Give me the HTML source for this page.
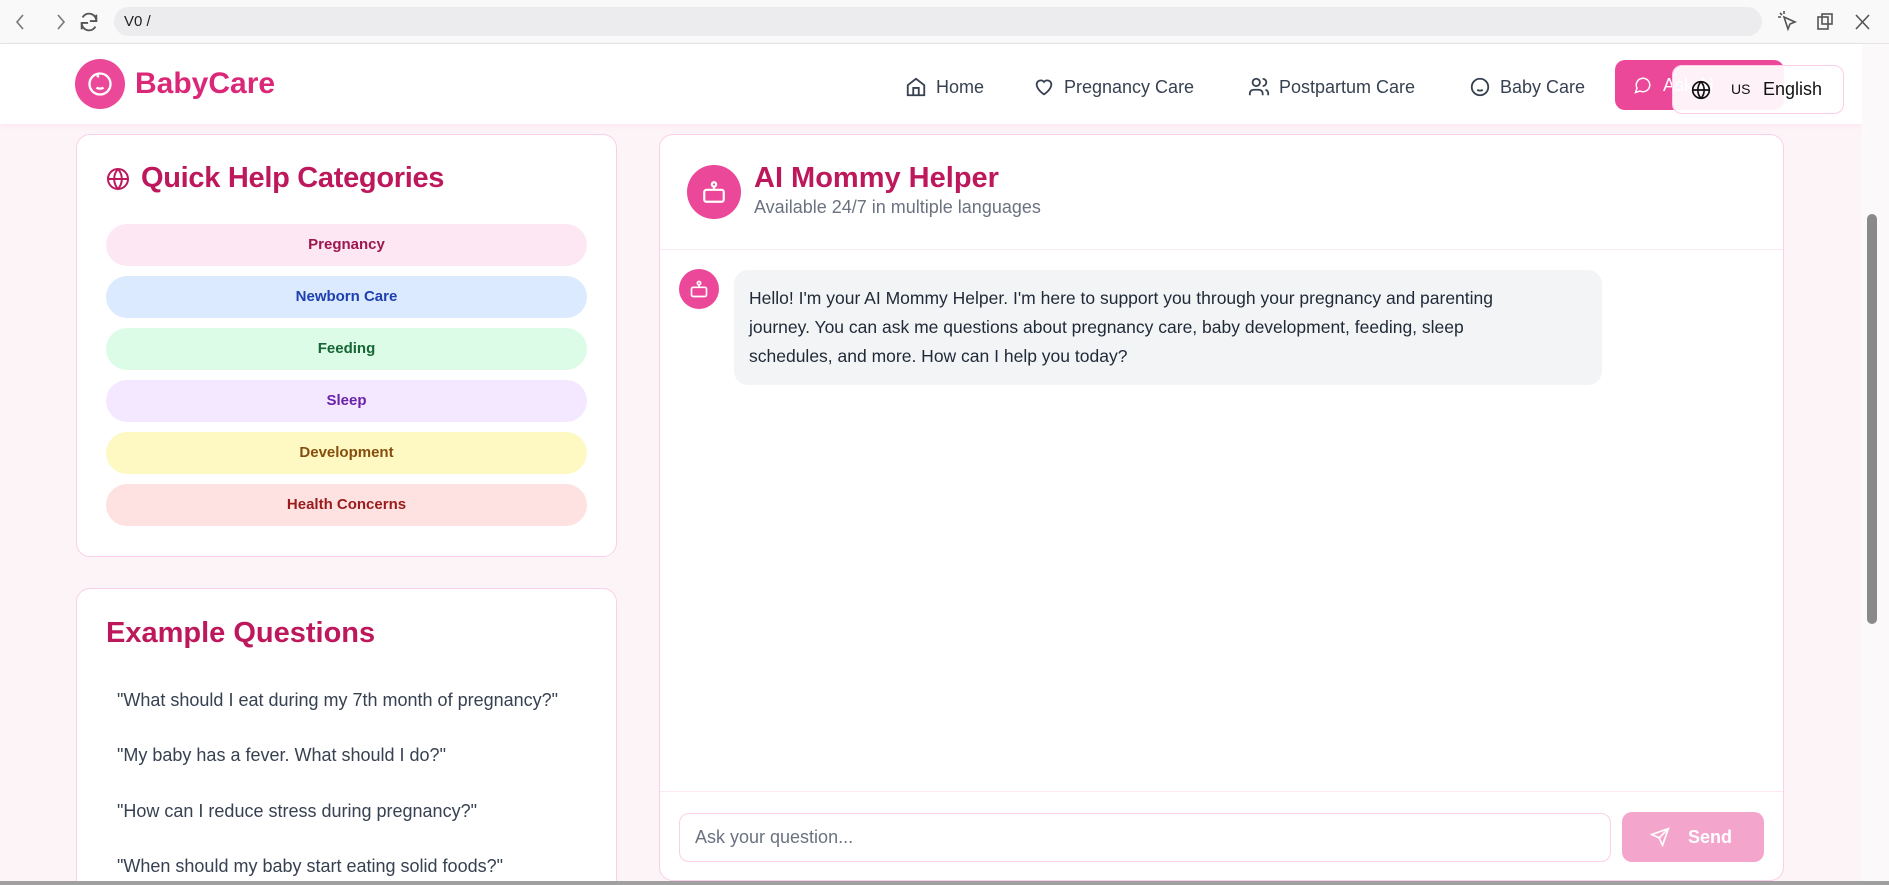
<!DOCTYPE html>
<html><head><meta charset="utf-8"><style>
*{box-sizing:border-box;margin:0;padding:0}
html,body{width:1889px;height:885px;overflow:hidden}
body{font-family:"Liberation Sans",sans-serif;background:#fdf4f8;position:relative;color:#1f2937}
.abs{position:absolute}
.topbar{left:0;top:0;width:1889px;height:44px;background:#f9f9f9;border-bottom:1px solid #e5e5e5}
.addr{left:114px;top:7px;width:1648px;height:29px;background:#ececee;border-radius:15px;font-size:15px;line-height:29px;padding-left:10px;color:#222}
.nav{left:0;top:44px;width:1862px;height:80px;background:#fff;box-shadow:0 2px 6px rgba(236,72,153,.08)}
.card{background:#fff;border:1px solid #fbcfe8;border-radius:14px}
.pill{position:absolute;left:106px;width:481px;height:42px;border-radius:21px;text-align:center;line-height:42px;font-size:15px;font-weight:bold}
.navi{position:absolute;top:76px;font-size:18px;color:#374151;display:flex;align-items:center;gap:9px}
.q{position:absolute;left:117px;font-size:18px;color:#374151}
.msg{font-size:17.5px;line-height:29px;color:#1f2937}
</style></head><body>
<div class="abs topbar"></div>
<svg class="abs" style="left:10px;top:12px" width="80" height="20" viewBox="0 0 80 20" fill="none" stroke="#777" stroke-width="1.6"><path d="M13 3 7 10l6 7"/><path d="M48 3l6 7-6 7"/></svg>
<svg class="abs" style="left:78px;top:11px" width="22" height="22" viewBox="0 0 24 24" fill="none" stroke="#555" stroke-width="2"><path d="M20 11A8 8 0 0 0 5 7M4 13a8 8 0 0 0 15 4"/><path d="M20 4v7h-7M4 20v-7h7"/></svg>
<div class="abs addr">V0 /</div>
<svg class="abs" style="left:1778px;top:11px" width="100" height="22" viewBox="0 0 100 22" fill="none" stroke="#555" stroke-width="1.6"><path d="M6 6l4 12 2-5 5-2z"/><path d="M2 2l2 2M6 0v3M0 6h3"/><rect x="40" y="6" width="10" height="12"/><rect x="44" y="3" width="10" height="10"/><path d="M78 4l13 14M91 4 78 18"/></svg>
<div class="abs nav"></div>
<div class="abs" style="left:75px;top:59px;width:50px;height:50px;border-radius:50%;background:#ec4899"></div>
<svg class="abs" style="left:86px;top:70px" width="28" height="28" viewBox="0 0 24 24" fill="none" stroke="#fff" stroke-width="2"><circle cx="12" cy="12" r="9"/><path d="M9 15c1.5 1.3 4.5 1.3 6 0M9 10h.01M15 10h.01M12 3c-2 0-3 2-1 3"/></svg>
<div class="abs" style="left:135px;top:67px;font-size:30px;font-weight:bold;color:#db2777">BabyCare</div>
<div class="navi" style="left:905px"><svg width="22" height="22" viewBox="0 0 24 24" fill="none" stroke="#374151" stroke-width="2"><path d="M3 10l9-7 9 7v11H3z"/><path d="M9 21v-8h6v8"/></svg>Home</div>
<div class="navi" style="left:1033px"><svg width="22" height="22" viewBox="0 0 24 24" fill="none" stroke="#374151" stroke-width="2"><path d="M12 20s-8-5-8-11a4.5 4.5 0 0 1 8-2.5A4.5 4.5 0 0 1 20 9c0 6-8 11-8 11z"/></svg>Pregnancy Care</div>
<div class="navi" style="left:1248px"><svg width="22" height="22" viewBox="0 0 24 24" fill="none" stroke="#374151" stroke-width="2"><circle cx="9" cy="7" r="4"/><path d="M2 21v-2a4 4 0 0 1 4-4h6a4 4 0 0 1 4 4v2M16 3a4 4 0 0 1 0 8M22 21v-2a4 4 0 0 0-3-4"/></svg>Postpartum Care</div>
<div class="navi" style="left:1469px"><svg width="22" height="22" viewBox="0 0 24 24" fill="none" stroke="#374151" stroke-width="2"><circle cx="12" cy="12" r="9"/><path d="M9 15c1.5 1.3 4.5 1.3 6 0M9 10h.01M15 10h.01"/></svg>Baby Care</div>
<div class="abs" style="left:1615px;top:60px;width:169px;height:50px;border-radius:10px;background:#ec4899;color:#fff;font-size:18px;line-height:50px;padding-left:48px">Ask AI</div>
<svg class="abs" style="left:1634px;top:76px" width="18" height="18" viewBox="0 0 24 24" fill="none" stroke="#fff" stroke-width="2"><path d="M7.9 20A9 9 0 1 0 4 16.1L2 22z"/></svg>
<div class="abs" style="left:1672px;top:65px;width:172px;height:49px;border-radius:10px;background:rgba(255,255,255,.93);border:1px solid #fbcfe8;font-size:18px;line-height:47px;color:#111"><svg style="position:absolute;left:18px;top:14px" width="20" height="20" viewBox="0 0 24 24" fill="none" stroke="#111" stroke-width="2"><circle cx="12" cy="12" r="10"/><path d="M2 12h20M12 2a15 15 0 0 1 0 20M12 2a15 15 0 0 0 0 20"/></svg><span style="position:absolute;left:58px;font-size:14px">US</span><span style="position:absolute;left:90px">English</span></div>

<div class="abs card" style="left:76px;top:134px;width:541px;height:423px"></div>
<svg class="abs" style="left:106px;top:167px" width="24" height="24" viewBox="0 0 24 24" fill="none" stroke="#be185d" stroke-width="2"><circle cx="12" cy="12" r="10"/><path d="M2 12h20M12 2a15 15 0 0 1 0 20M12 2a15 15 0 0 0 0 20"/></svg>
<div class="abs" style="left:141px;top:162px;font-size:29px;font-weight:bold;color:#be185d;letter-spacing:-.3px">Quick Help Categories</div>
<div class="pill" style="top:224px;background:#fce7f3;color:#9d174d">Pregnancy</div>
<div class="pill" style="top:276px;background:#dbeafe;color:#1e40af">Newborn Care</div>
<div class="pill" style="top:328px;background:#dcfce7;color:#166534">Feeding</div>
<div class="pill" style="top:380px;background:#f3e8ff;color:#6b21a8">Sleep</div>
<div class="pill" style="top:432px;background:#fef9c3;color:#854d0e">Development</div>
<div class="pill" style="top:484px;background:#fee2e2;color:#991b1b">Health Concerns</div>

<div class="abs card" style="left:76px;top:588px;width:541px;height:320px"></div>
<div class="abs" style="left:106px;top:617px;font-size:29px;font-weight:bold;color:#be185d">Example Questions</div>
<div class="q" style="top:690px">"What should I eat during my 7th month of pregnancy?"</div>
<div class="q" style="top:745px">"My baby has a fever. What should I do?"</div>
<div class="q" style="top:801px">"How can I reduce stress during pregnancy?"</div>
<div class="q" style="top:856px">"When should my baby start eating solid foods?"</div>

<div class="abs card" style="left:659px;top:134px;width:1125px;height:747px"></div>
<div class="abs" style="left:687px;top:165px;width:54px;height:54px;border-radius:50%;background:#ec4899"></div>
<svg class="abs" style="left:701px;top:179px" width="26" height="26" viewBox="0 0 24 24" fill="none" stroke="#fff" stroke-width="2"><rect x="3" y="10" width="18" height="11" rx="2"/><circle cx="12" cy="5" r="2"/><path d="M12 7v3M8 15h.01M16 15h.01"/></svg>
<div class="abs" style="left:754px;top:162px;font-size:29px;font-weight:bold;color:#be185d">AI Mommy Helper</div>
<div class="abs" style="left:754px;top:197px;font-size:18px;color:#6b7280">Available 24/7 in multiple languages</div>
<div class="abs" style="left:660px;top:249px;width:1123px;height:1px;background:#fce7f3"></div>
<div class="abs" style="left:679px;top:269px;width:40px;height:40px;border-radius:50%;background:#ec4899"></div>
<svg class="abs" style="left:689px;top:279px" width="20" height="20" viewBox="0 0 24 24" fill="none" stroke="#fff" stroke-width="2"><rect x="3" y="10" width="18" height="11" rx="2"/><circle cx="12" cy="5" r="2"/><path d="M12 7v3M8 15h.01M16 15h.01"/></svg>
<div class="abs msg" style="left:734px;top:270px;width:868px;height:115px;background:#f3f4f6;border-radius:14px;padding:14px 15px;white-space:nowrap">Hello! I'm your AI Mommy Helper. I'm here to support you through your pregnancy and parenting<br>journey. You can ask me questions about pregnancy care, baby development, feeding, sleep<br>schedules, and more. How can I help you today?</div>
<div class="abs" style="left:660px;top:791px;width:1123px;height:1px;background:#fce7f3"></div>
<div class="abs" style="left:679px;top:813px;width:932px;height:49px;border:1px solid #fbcfe8;border-radius:10px;font-size:18px;line-height:47px;padding-left:15px;color:#6b7280">Ask your question...</div>
<div class="abs" style="left:1622px;top:812px;width:142px;height:50px;border-radius:10px;background:#f4a5cc;color:#fff;font-size:18px;font-weight:bold;line-height:50px;padding-left:66px">Send</div>
<svg class="abs" style="left:1650px;top:827px" width="20" height="20" viewBox="0 0 24 24" fill="none" stroke="#fff" stroke-width="2"><path d="M22 2 11 13M22 2l-7 20-4-9-9-4z"/></svg>
<div class="abs" style="left:1862px;top:44px;width:27px;height:841px;background:#fbf9fa"></div>
<div class="abs" style="left:1867px;top:214px;width:10px;height:410px;background:#8a8a8a;border-radius:5px"></div>
<div class="abs" style="left:0;top:881px;width:1889px;height:4px;background:#a0a0a0"></div>
</body></html>
